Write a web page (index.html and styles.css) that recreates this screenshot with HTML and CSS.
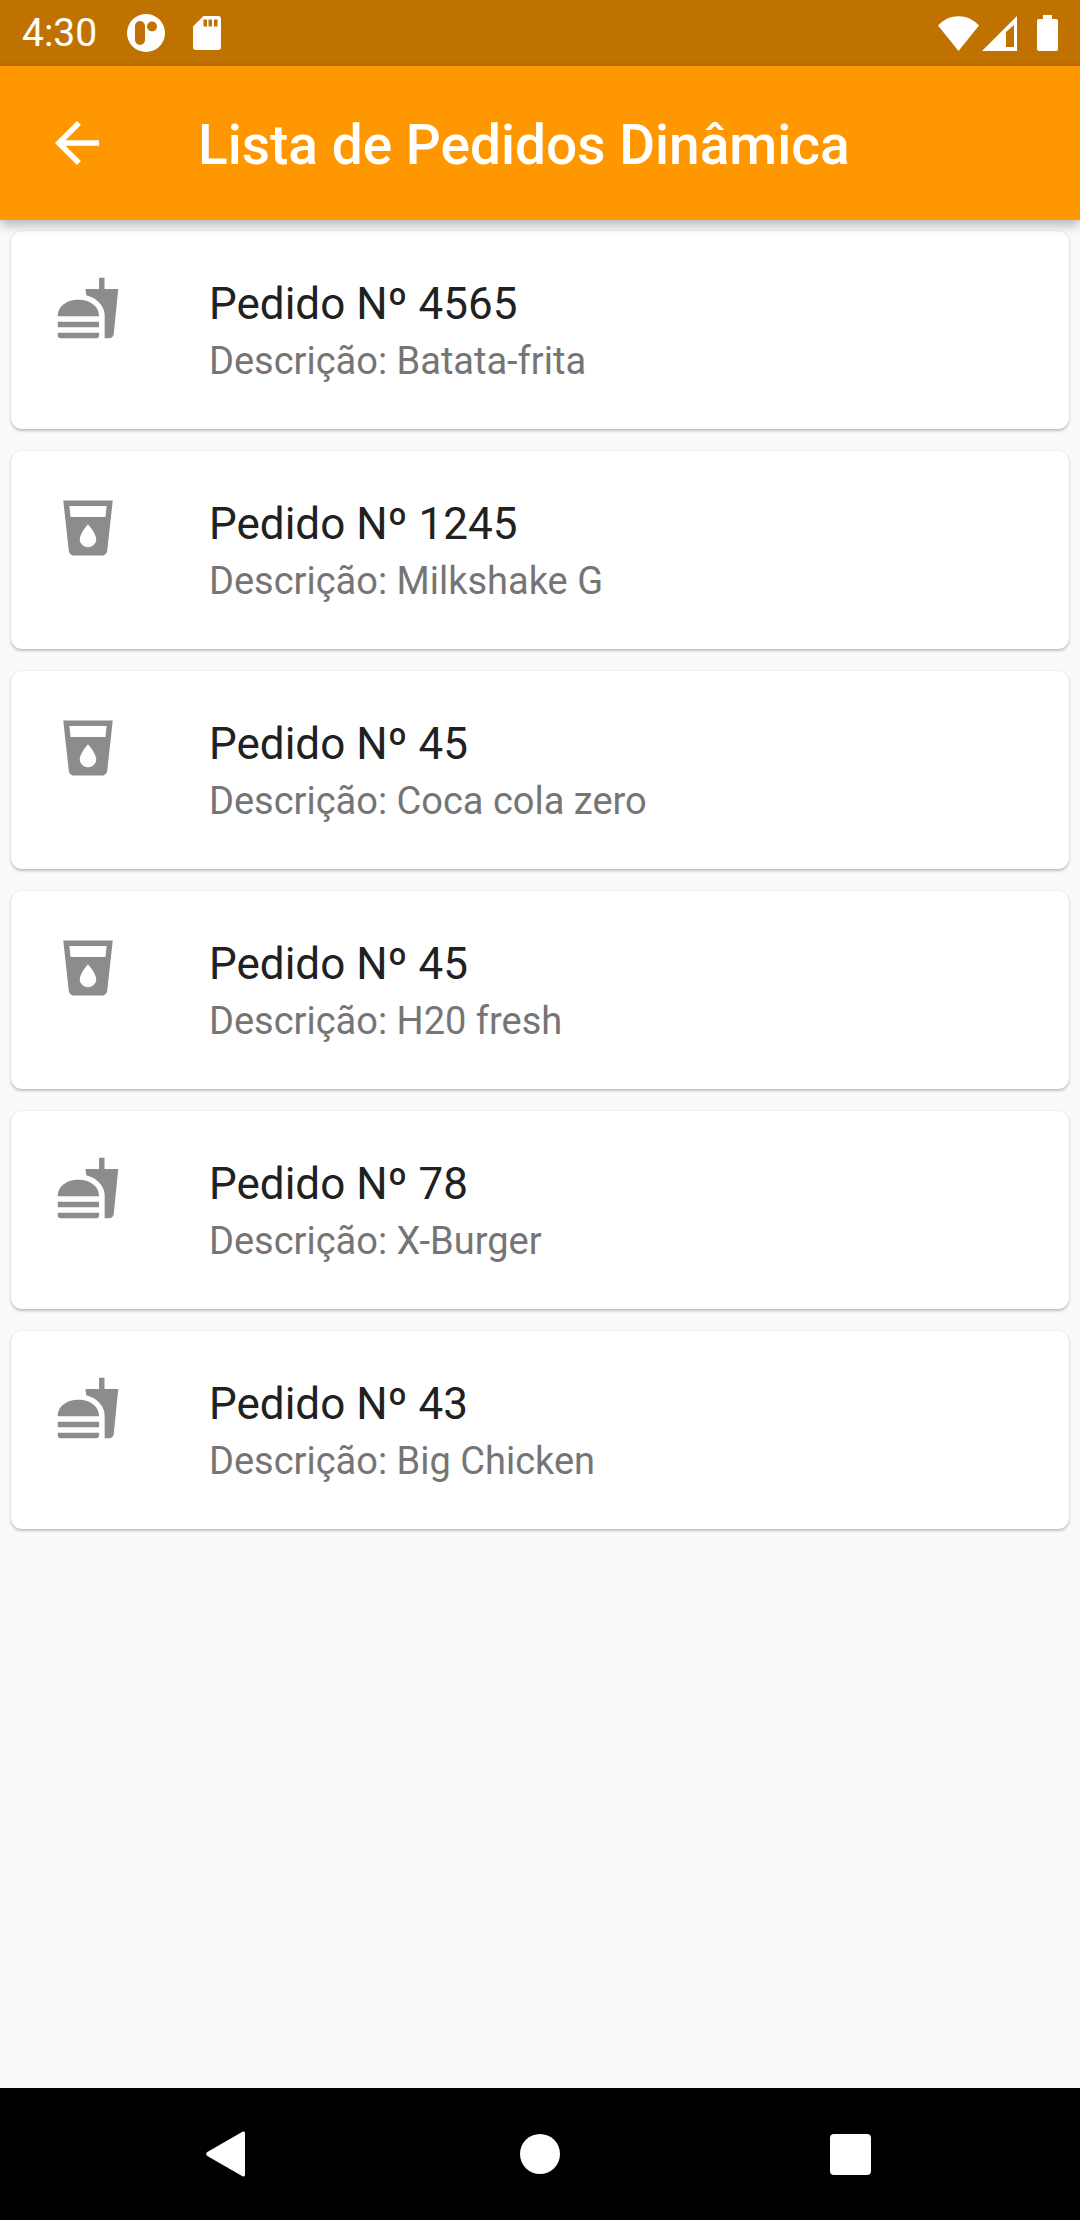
FILE: index.html
```html
<!DOCTYPE html>
<html lang="pt-BR">
<head>
  <meta charset="utf-8">
  <meta name="viewport" content="width=device-width, initial-scale=1">
  <title>Lista de Pedidos Dinâmica</title>
  <link rel="stylesheet" href="styles.css">
</head>
<body>
  <svg class="symbols" width="0" height="0" aria-hidden="true">
    <symbol id="food" viewBox="0 0 24 24">
      <path d="M18.06 22.99h1.66c.84 0 1.53-.64 1.63-1.46L23 5.05h-5V1h-1.97v4.05h-4.97l.3 2.34c1.71.47 3.31 1.32 4.27 2.26 1.44 1.42 2.43 2.89 2.43 5.29v8.05zM1 21.99V21h15.03v.99c0 .55-.45 1-1.01 1H2.01c-.56 0-1.01-.45-1.01-1zm15.03-7c0-8-15.03-8-15.03 0h15.03zM1.02 17h15v2h-15z"/>
    </symbol>
    <symbol id="drink" viewBox="0 0 24 24">
      <path d="M3 2l2.01 18.23C5.13 21.23 5.97 22 7 22h10c1.03 0 1.87-.77 1.99-1.77L21 2H3zm9 17c-1.66 0-3-1.34-3-3 0-2 3-5.400 3-5.400s3 3.400 3 5.400c0 1.660-1.340 3-3 3zm6.330-11H5.670l-.44-4h13.540l-.44 4z"/>
    </symbol>
  </svg>

  <div class="status-bar">
    <time class="clock">4:30</time>
    <div class="notifications">
      <svg width="38" height="38" viewBox="0 0 38 38" aria-hidden="true">
        <path fill-rule="evenodd" d="M19 0a19 19 0 1 1 0 38a19 19 0 1 1 0-38zM13 7a5 5 0 0 0-5 5v14a5 5 0 0 0 10 0v-14a5 5 0 0 0-5-5zM25 7.500a5 5 0 1 0 0 10a5 5 0 1 0 0-10z"/>
      </svg>
      <svg width="28" height="34" viewBox="0 0 28 34" aria-hidden="true">
        <path fill-rule="evenodd" d="M10.500 0H25a3 3 0 0 1 3 3v28a3 3 0 0 1-3 3H3a3 3 0 0 1-3-3V10.500zM10.500 3.500v7h3.500v-7zM15.500 3.500v7H19v-7zM21 3.500v7h3.500v-7z"/>
      </svg>
    </div>
    <div class="indicators">
      <svg width="41" height="35" viewBox="0 0 41 35" aria-hidden="true">
        <path d="M0 9.500C11-3 30-3 41 9.500L20.500 35z"/>
      </svg>
      <svg width="35" height="35" viewBox="0 0 35 35" aria-hidden="true">
        <path d="M35 0v35H0z"/>
        <path class="signal-gap" d="M32 9v22h-8V16z"/>
      </svg>
      <svg class="battery" width="21" height="36" viewBox="0 0 21 36" aria-hidden="true">
        <path d="M6 0h9v4h4a2 2 0 0 1 2 2v28a2 2 0 0 1-2 2H2a2 2 0 0 1-2-2V6a2 2 0 0 1 2-2h4z"/>
      </svg>
    </div>
  </div>

  <header class="app-bar">
    <button class="back" type="button" aria-label="Voltar">
      <svg width="66" height="66" viewBox="0 0 24 24" aria-hidden="true">
        <path d="M20 11H7.830l5.590-5.590L12 4l-8 8 8 8 1.410-1.410L7.830 13H20v-2z"/>
      </svg>
    </button>
    <h1 class="app-title">Lista de Pedidos Dinâmica</h1>
  </header>

  <main class="content">
    <ul class="orders">
      <li class="card">
        <svg class="card-icon" aria-hidden="true"><use href="#food"/></svg>
        <div class="card-text">
          <h2 class="card-title">Pedido Nº 4565</h2>
          <p class="card-description">Descrição: Batata-frita</p>
        </div>
      </li>
      <li class="card">
        <svg class="card-icon" aria-hidden="true"><use href="#drink"/></svg>
        <div class="card-text">
          <h2 class="card-title">Pedido Nº 1245</h2>
          <p class="card-description">Descrição: Milkshake G</p>
        </div>
      </li>
      <li class="card">
        <svg class="card-icon" aria-hidden="true"><use href="#drink"/></svg>
        <div class="card-text">
          <h2 class="card-title">Pedido Nº 45</h2>
          <p class="card-description">Descrição: Coca cola zero</p>
        </div>
      </li>
      <li class="card">
        <svg class="card-icon" aria-hidden="true"><use href="#drink"/></svg>
        <div class="card-text">
          <h2 class="card-title">Pedido Nº 45</h2>
          <p class="card-description">Descrição: H20 fresh</p>
        </div>
      </li>
      <li class="card">
        <svg class="card-icon" aria-hidden="true"><use href="#food"/></svg>
        <div class="card-text">
          <h2 class="card-title">Pedido Nº 78</h2>
          <p class="card-description">Descrição: X-Burger</p>
        </div>
      </li>
      <li class="card">
        <svg class="card-icon" aria-hidden="true"><use href="#food"/></svg>
        <div class="card-text">
          <h2 class="card-title">Pedido Nº 43</h2>
          <p class="card-description">Descrição: Big Chicken</p>
        </div>
      </li>
    </ul>
  </main>

  <nav class="system-nav" aria-label="Sistema">
    <button class="nav-button" type="button" aria-label="Voltar">
      <svg width="48" height="48" viewBox="0 0 48 48" aria-hidden="true">
        <path d="M36.500 1.800Q39 .500 39 3.500v41Q39 47.500 36.500 46.200L1.300 26Q-1 24 1.300 22z"/>
      </svg>
    </button>
    <button class="nav-button" type="button" aria-label="Início">
      <svg width="48" height="48" viewBox="0 0 48 48" aria-hidden="true">
        <circle cx="24" cy="24" r="20"/>
      </svg>
    </button>
    <button class="nav-button" type="button" aria-label="Recentes">
      <svg width="48" height="48" viewBox="0 0 48 48" aria-hidden="true">
        <rect x="4" y="4" width="41" height="41" rx="4"/>
      </svg>
    </button>
  </nav>
</body>
</html>
```
FILE: styles.css
```css
* {
  box-sizing: border-box;
}

body {
  margin: 0;
  min-height: 100vh;
  display: flex;
  flex-direction: column;
  background: #fafafa;
  font-family: Roboto, "Liberation Sans", sans-serif;
}

svg {
  display: block;
  flex: none;
  fill: currentColor;
}

.symbols {
  position: absolute;
}

button {
  display: flex;
  align-items: center;
  justify-content: center;
  padding: 0;
  border: 0;
  background: none;
  color: inherit;
}

.status-bar {
  display: flex;
  align-items: center;
  height: 66px;
  padding: 0 22px;
  background: #bf7200;
  color: #fff;
}

.clock {
  font-size: 39px;
  line-height: 48px;
}

.notifications {
  display: flex;
  align-items: center;
  gap: 28px;
  margin-left: 30px;
}

.indicators {
  display: flex;
  align-items: center;
  gap: 3px;
  margin-left: auto;
}

.battery {
  margin-left: 17px;
}

.signal-gap {
  fill: #bf7200;
}

.app-bar {
  position: relative;
  z-index: 1;
  display: flex;
  align-items: flex-start;
  gap: 88px;
  min-height: 154px;
  padding: 44px 44px 40px;
  background: #ff9800;
  color: #fff;
  box-shadow: 0 5px 11px rgba(0, 0, 0, 0.28);
}

.app-title {
  margin: 0;
  font-size: 55px;
  font-weight: 500;
  line-height: 70px;
}

.content {
  flex: 1;
  padding: 11px;
}

.orders {
  display: flex;
  flex-direction: column;
  gap: 22px;
  margin: 0;
  padding: 0;
  list-style: none;
}

.card {
  display: flex;
  gap: 88px;
  min-height: 198px;
  padding: 44px 44px 40px;
  border-radius: 11px;
  background: #fff;
  box-shadow: 0 2px 3px rgba(0, 0, 0, 0.22), 0 0 2px rgba(0, 0, 0, 0.12);
}

.card-icon {
  width: 66px;
  height: 66px;
  color: #8c8c8c;
}

.card-title {
  margin: 0;
  color: #212121;
  font-size: 44px;
  font-weight: 400;
  line-height: 58px;
}

.card-description {
  margin: 0;
  color: #757575;
  font-size: 38px;
  line-height: 56px;
}

.system-nav {
  display: grid;
  grid-template-columns: repeat(3, 1fr);
  height: 132px;
  padding: 0 75px;
  background: #000;
  color: #fff;
}
```
